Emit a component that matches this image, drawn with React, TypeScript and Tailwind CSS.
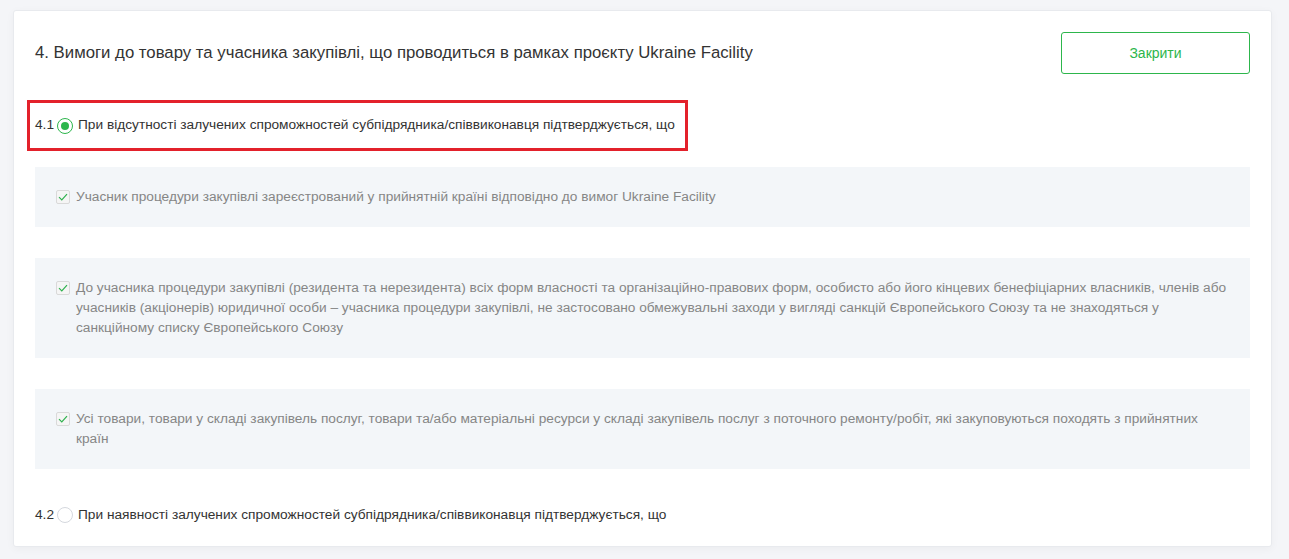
import React from "react";

const font = { fontFamily: '"Liberation Sans", Arial, sans-serif' };

function Check() {
  return (
    <span className="mt-[3px] flex h-[14px] w-[14px] shrink-0 items-center justify-center rounded-[2px] border border-[#d9d9d9] bg-[#f5f5f5]">
      <svg width="10" height="8" viewBox="0 0 10 8" fill="none">
        <path d="M1 4.2 L3.8 7 L9 1.2" stroke="#2fb14e" strokeWidth="1.2" />
      </svg>
    </span>
  );
}

function Item({ children }: { children: React.ReactNode }) {
  return (
    <div className="flex gap-[6px] bg-[#f3f6f9] px-[21px] py-[20px] text-[13.7px] leading-[20px] text-[#868686]">
      <Check />
      <div>{children}</div>
    </div>
  );
}

export default function App() {
  return (
    <div className="min-h-[559px] bg-[#f4f5f8] pt-[10px] pb-[13px]" style={font}>
      <div className="ml-[13px] w-[1259px] rounded-[3px] border border-[#e8eaee] bg-white px-[21px] pt-[21px] pb-[21px] shadow-[0_2px_8px_rgba(0,0,0,0.04)]">
        <div className="flex h-[42px] items-center justify-between">
          <div className="text-[16.75px] text-[#333333]">
            4. Вимоги до товару та учасника закупівлі, що проводиться в рамках проєкту Ukraine Facility
          </div>
          <button className="h-[42px] w-[189px] rounded-[3px] border border-[#2db64c] text-[14px] text-[#2db64c]">
            Закрити
          </button>
        </div>

        <div className="mt-[26px] -ml-[8px] flex h-[51px] w-[661px] items-center border-[3px] border-[#e3212b] pl-[5px] text-[13.7px] text-[#333333]">
          <span>4.1</span>
          <span className="ml-[3px] flex h-[16px] w-[16px] items-center justify-center rounded-full border border-[#2db64c] bg-white">
            <span className="h-[8px] w-[8px] rounded-full bg-[#2db64c]" />
          </span>
          <span className="ml-[5px] whitespace-nowrap">
            При відсутності залучених спроможностей субпідрядника/співвиконавця підтверджується, що
          </span>
        </div>

        <div className="mt-[16px] flex flex-col gap-[31px]">
          <Item>Учасник процедури закупівлі зареєстрований у прийнятній країні відповідно до вимог Ukraine Facility</Item>
          <Item>
            До учасника процедури закупівлі (резидента та нерезидента) всіх форм власності та організаційно-правових форм, особисто або його кінцевих бенефіціарних власників, членів або учасників (акціонерів) юридичної особи – учасника процедури закупівлі, не застосовано обмежувальні заходи у вигляді санкцій Європейського Союзу та не знаходяться у санкційному списку Європейського Союзу
          </Item>
          <Item>
            Усі товари, товари у складі закупівель послуг, товари та/або матеріальні ресурси у складі закупівель послуг з поточного ремонту/робіт, які закуповуються походять з прийнятних країн
          </Item>
        </div>

        <div className="mt-[36px] flex h-[20px] items-center text-[13.7px] text-[#333333]">
          <span>4.2</span>
          <span className="ml-[3px] h-[16px] w-[16px] rounded-full border border-[#d5d8de] bg-white" />
          <span className="ml-[5px]">
            При наявності залучених спроможностей субпідрядника/співвиконавця підтверджується, що
          </span>
        </div>
      </div>
    </div>
  );
}
